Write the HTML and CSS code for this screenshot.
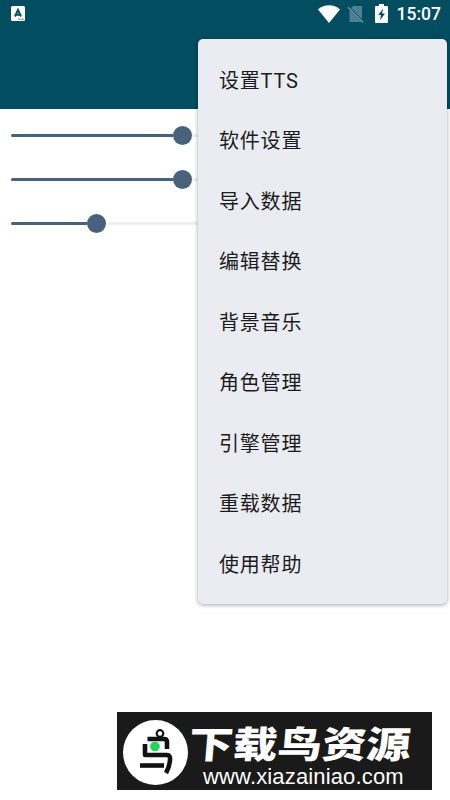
FILE: index.html
```
<!DOCTYPE html>
<html lang="zh-CN">
<head>
    <meta charset="UTF-8">
    <meta name="viewport" content="width=device-width, initial-scale=1.0">
    <title>TTS</title>
    <link rel="stylesheet" href="styles.css">
</head>

<body>
<!-- Status bar and app bar -->
<header class="app-bar">
    <div class="status-bar">
        <svg class="icon-app" width="14" height="15" viewBox="0 0 14 15">
            <rect width="14" height="15" rx="1.5" fill="#fff"/>
            <path d="M4 10.5L7 3.8L10 10.5M5 8.7H9" fill="none" stroke="#024d60" stroke-width="1.9"/>
            <path d="M7 13.2H13" stroke="#6d96a1" stroke-width="1"/>
        </svg>
        <div class="status-icons">
            <svg class="icon-wifi" width="22" height="18" viewBox="0 0 22 18">
                <path d="M0 4.4C6.3-1.1 15.7-1.1 22 4.4L11 18Z" fill="#fff"/>
            </svg>
            <svg class="icon-sim" width="17" height="18" viewBox="0 0 17 18">
                <path d="M6 1H15V14.2L4 3.2ZM2.5 5.2L14 17H2.5Z" fill="#4e8190"/>
                <path d="M1 2.2L16 17.5" stroke="#6995a1" stroke-width="1.5"/>
            </svg>
            <svg class="icon-battery" width="13" height="19" viewBox="0 0 13 19">
                <path d="M4 0H9V2H12Q13 2 13 3V18Q13 19 12 19H1Q0 19 0 18V3Q0 2 1 2H4Z" fill="#fff"/>
                <path d="M8.2 4.5L3.2 11H6L5 16.2L10 9.5H7Z" fill="#024d60"/>
            </svg>
            <span class="clock">15:07</span>
        </div>
    </div>
</header>

<!-- Sliders -->
<main class="sliders">
    <div class="slider"><div class="fill"></div><div class="thumb"></div><div class="rest"></div></div>
    <div class="slider"><div class="fill"></div><div class="thumb"></div><div class="rest"></div></div>
    <div class="slider slider-low"><div class="fill"></div><div class="thumb"></div><div class="rest"></div></div>
</main>

<!-- Site banner -->
<footer class="banner">
    <svg class="banner-logo" width="65" height="65" viewBox="0 0 65 65">
        <circle cx="32.5" cy="32.5" r="32.5" fill="#fff"/>
        <g fill="none" stroke="#111" stroke-width="4.6" stroke-linejoin="round">
            <circle cx="37" cy="13.5" r="3.3" stroke-width="2.2"/>
            <path d="M24.5 19H41Q44 19 44 22V29"/>
            <path d="M22 24V35H44Q47.5 35 47 40Q46.5 47 43 53"/>
            <path d="M17 45.5H41"/>
        </g>
        <circle cx="32" cy="26.5" r="4.8" fill="#22d45b"/>
    </svg>
    <div class="banner-text">
        <div class="banner-name">下载鸟资源</div>
        <div class="banner-url">www.xiazainiao.com</div>
    </div>
</footer>

<!-- Overflow menu -->
<ul class="menu">
    <li>设置TTS</li>
    <li>软件设置</li>
    <li>导入数据</li>
    <li>编辑替换</li>
    <li>背景音乐</li>
    <li>角色管理</li>
    <li>引擎管理</li>
    <li>重载数据</li>
    <li>使用帮助</li>
</ul>
</body>
</html>
```
FILE: styles.css
```
* {
    padding: 0;
    margin: 0;
    box-sizing: border-box;
}

body {
    height: 800px;
    padding-bottom: 10px;
    display: flex;
    flex-direction: column;
    overflow: hidden;
    background: #ffffff;
    font-family: Roboto, "Noto Sans CJK SC", sans-serif;
}

.app-bar {
    height: 109px;
    background: #024d60;
}

.status-bar {
    height: 27px;
    padding: 0 9px 0 11px;
    display: flex;
    align-items: center;
    justify-content: space-between;
}

.status-icons {
    display: flex;
    align-items: center;
}

.icon-sim {
    margin-left: 7px;
}

.icon-battery {
    margin: 0 9px 0 11px;
}

.clock {
    padding-top: 2px;
    color: #ffffff;
    font-size: 17.5px;
    font-weight: 500;
    line-height: 25px;
}

.sliders {
    flex: 1;
    padding: 4px 10px 0 11px;
}

.slider {
    height: 44px;
    display: flex;
    align-items: center;
}

.fill {
    width: 162px;
    height: 3px;
    border-radius: 2px 0 0 2px;
    background: #48617c;
}

.slider-low .fill {
    width: 76px;
}

.thumb {
    width: 19px;
    height: 19px;
    border-radius: 50%;
    background: #48617c;
}

.rest {
    flex: 1;
    height: 3px;
    background: #eef1f2;
}

.menu {
    position: absolute;
    top: 39px;
    left: 198px;
    width: 249px;
    height: 565px;
    padding: 11.5px 0 8px;
    list-style: none;
    border-radius: 5px;
    background: #eaecf2;
    box-shadow: 0 1px 4px rgba(0, 0, 0, 0.35);
}

.menu li {
    height: 60.5px;
    padding-left: 21px;
    line-height: 60.5px;
    font-size: 20px;
    letter-spacing: 0.8px;
    color: #1c1d20;
}

.banner {
    width: 315px;
    height: 78px;
    margin-left: 117px;
    padding: 8px 0 0 5px;
    display: flex;
    background: #1a1a1a;
    color: #ffffff;
}

.banner-logo {
    margin-left: 1px;
}

.banner-text {
    padding-left: 1px;
}

.banner-name {
    height: 45px;
    line-height: 44px;
    font-family: "Noto Sans CJK SC", sans-serif;
    font-size: 37px;
    font-weight: 900;
    white-space: nowrap;
    transform: scaleX(1.2) skewX(-4deg);
    transform-origin: left center;
}

.banner-url {
    padding-left: 14px;
    font-family: "Liberation Sans", sans-serif;
    font-size: 22px;
    line-height: 23px;
    letter-spacing: 0.15px;
}
```
